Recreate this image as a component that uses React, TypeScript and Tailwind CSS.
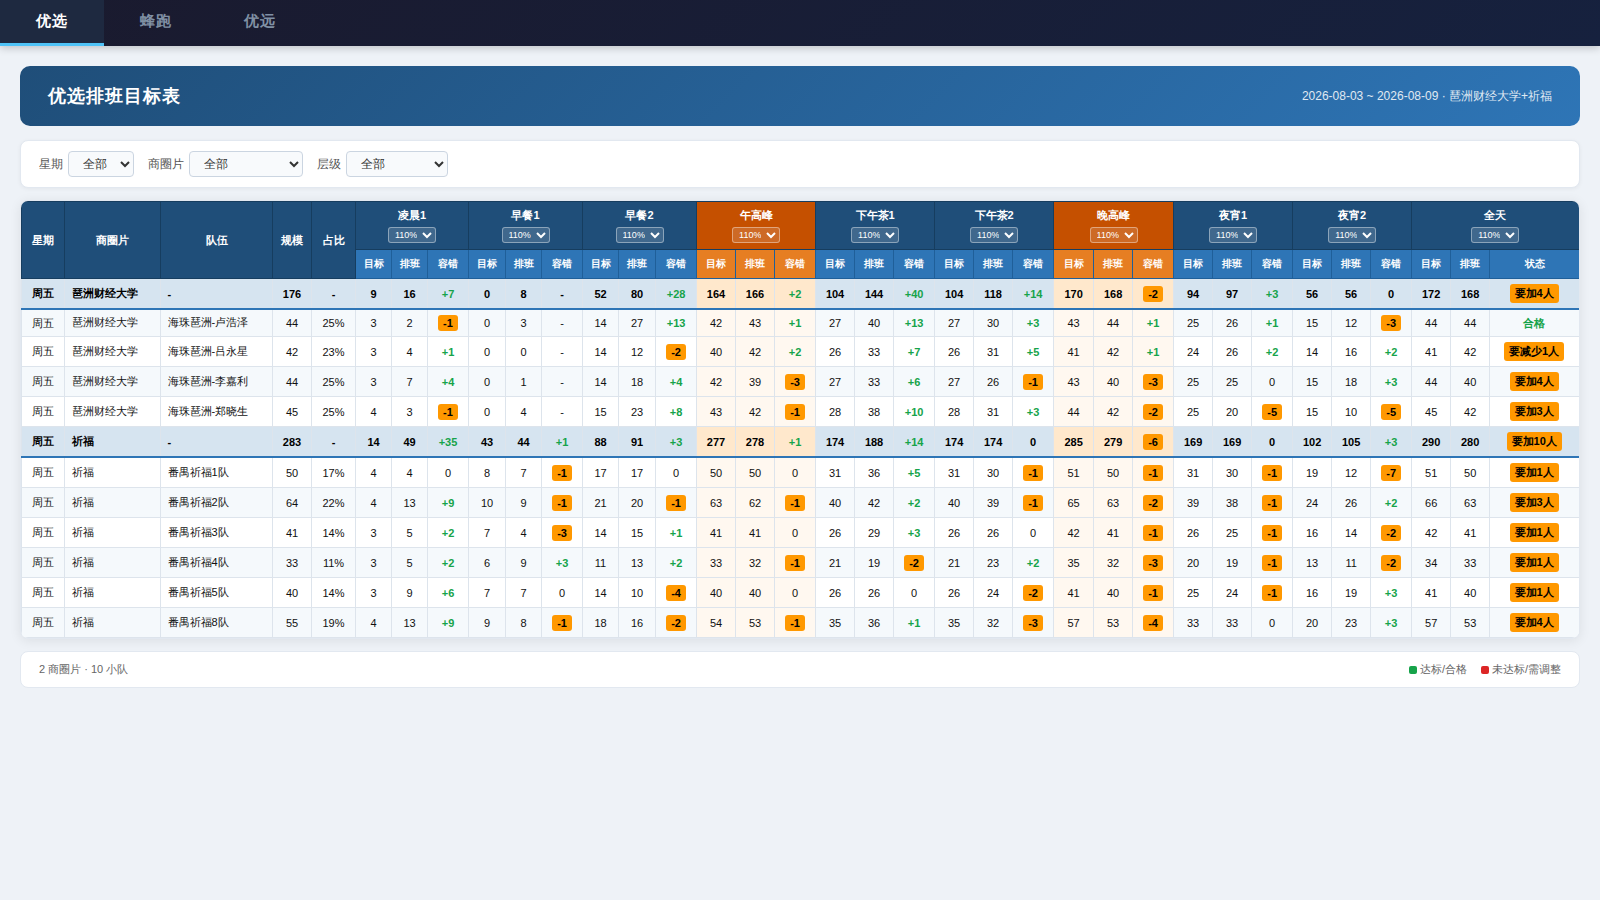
import React from 'react';

const COLS = [
  43, 96, 112, 39, 44, 36, 36, 41, 37, 36, 41, 36, 37, 41, 39, 39, 41, 39, 39, 41, 39, 39, 41, 40, 39, 41, 39, 39, 41,
  39, 39, 41, 39, 39, 90,
];

const PERIODS = ['凌晨1', '早餐1', '早餐2', '午高峰', '下午茶1', '下午茶2', '晚高峰', '夜宵1', '夜宵2', '全天'];
const isPeak = (period: number) => period === 3 || period === 6;

type Row = { area: string; team: string; size: string; share: string; values: string; status: string; height: number };

const ROWS: Row[] = [
  { area: '琶洲财经大学', team: '-', size: '176', share: '-', height: 30, status: '要加4人', values: '9 16 +7 0 8 - 52 80 +28 164 166 +2 104 144 +40 104 118 +14 170 168 -2 94 97 +3 56 56 0 172 168' },
  { area: '琶洲财经大学', team: '海珠琶洲-卢浩泽', size: '44', share: '25%', height: 28, status: '合格', values: '3 2 -1 0 3 - 14 27 +13 42 43 +1 27 40 +13 27 30 +3 43 44 +1 25 26 +1 15 12 -3 44 44' },
  { area: '琶洲财经大学', team: '海珠琶洲-吕永星', size: '42', share: '23%', height: 30, status: '要减少1人', values: '3 4 +1 0 0 - 14 12 -2 40 42 +2 26 33 +7 26 31 +5 41 42 +1 24 26 +2 14 16 +2 41 42' },
  { area: '琶洲财经大学', team: '海珠琶洲-李嘉利', size: '44', share: '25%', height: 30, status: '要加4人', values: '3 7 +4 0 1 - 14 18 +4 42 39 -3 27 33 +6 27 26 -1 43 40 -3 25 25 0 15 18 +3 44 40' },
  { area: '琶洲财经大学', team: '海珠琶洲-郑晓生', size: '45', share: '25%', height: 30, status: '要加3人', values: '4 3 -1 0 4 - 15 23 +8 43 42 -1 28 38 +10 28 31 +3 44 42 -2 25 20 -5 15 10 -5 45 42' },
  { area: '祈福', team: '-', size: '283', share: '-', height: 30, status: '要加10人', values: '14 49 +35 43 44 +1 88 91 +3 277 278 +1 174 188 +14 174 174 0 285 279 -6 169 169 0 102 105 +3 290 280' },
  { area: '祈福', team: '番禺祈福1队', size: '50', share: '17%', height: 31, status: '要加1人', values: '4 4 0 8 7 -1 17 17 0 50 50 0 31 36 +5 31 30 -1 51 50 -1 31 30 -1 19 12 -7 51 50' },
  { area: '祈福', team: '番禺祈福2队', size: '64', share: '22%', height: 30, status: '要加3人', values: '4 13 +9 10 9 -1 21 20 -1 63 62 -1 40 42 +2 40 39 -1 65 63 -2 39 38 -1 24 26 +2 66 63' },
  { area: '祈福', team: '番禺祈福3队', size: '41', share: '14%', height: 30, status: '要加1人', values: '3 5 +2 7 4 -3 14 15 +1 41 41 0 26 29 +3 26 26 0 42 41 -1 26 25 -1 16 14 -2 42 41' },
  { area: '祈福', team: '番禺祈福4队', size: '33', share: '11%', height: 30, status: '要加1人', values: '3 5 +2 6 9 +3 11 13 +2 33 32 -1 21 19 -2 21 23 +2 35 32 -3 20 19 -1 13 11 -2 34 33' },
  { area: '祈福', team: '番禺祈福5队', size: '40', share: '14%', height: 30, status: '要加1人', values: '3 9 +6 7 7 0 14 10 -4 40 40 0 26 26 0 26 24 -2 41 40 -1 25 24 -1 16 19 +3 41 40' },
  { area: '祈福', team: '番禺祈福8队', size: '55', share: '19%', height: 30, status: '要加4人', values: '4 13 +9 9 8 -1 18 16 -2 54 53 -1 35 36 +1 35 32 -3 57 53 -4 33 33 0 20 23 +3 57 53' },
];

const isShort = (value: string) => /^-\d/.test(value);

function Delta({ value }: { value: string }) {
  if (isShort(value)) {
    return <span className="inline-block rounded-[3px] bg-[#ff9800] px-[5px] py-[2px] font-bold leading-[12px] text-black">{value}</span>;
  }
  if (value.startsWith('+')) return <span className="font-bold text-[#16a34a]">{value}</span>;
  return <>{value}</>;
}

function Filter({ label, width }: { label: string; width: string }) {
  return (
    <label className="flex items-center gap-[5px] text-[12px] text-[#555]">
      {label}
      <select className={`h-[26px] rounded-[4px] border border-[#cbd5e1] bg-[#f8fafc] px-[10px] text-[12px] text-[#333] ${width}`}>
        <option>全部</option>
      </select>
    </label>
  );
}

function BodyRow({ row, index }: { row: Row; index: number }) {
  const group = row.team === '-';
  const passed = row.status === '合格';
  const values = row.values.split(' ');
  const line = group ? 'border border-[#dde4ec] border-b-2 border-b-[#2e75b6]' : 'border border-[#dde4ec]';
  const bg = group ? 'bg-[#d6e4f0]' : index % 2 === 1 ? 'bg-[#f5f9fc]' : 'bg-white';
  const numeric = `${line} px-0 pt-[2px] pb-0 text-center`;
  const name = `${line} py-0 pr-0 pl-[6.5px] text-left`;
  return (
    <tr className={`${bg} ${group ? 'font-bold text-black' : 'text-[#111]'}`} style={{ height: row.height }}>
      <td className={`${line} px-0 pb-0 text-center ${passed ? 'pt-[2px]' : 'pt-0'}`}>周五</td>
      <td className={name}>{row.area}</td>
      <td className={`${name} ${group ? 'pt-[2px]' : ''}`}>{row.team}</td>
      <td className={numeric}>{row.size}</td>
      <td className={numeric}>{row.share}</td>
      {values.map((v, i) => {
        const peak = isPeak(Math.floor(i / 3));
        const tint = peak ? (group ? 'bg-[#ffe8cc]' : 'bg-[#fff8f0]') : '';
        const delta = i % 3 === 2;
        return (
          <td key={i} className={`${line} px-0 pb-0 text-center ${delta && isShort(v) ? 'pt-[1px]' : 'pt-[2px]'} ${tint}`}>
            {delta ? <Delta value={v} /> : v}
          </td>
        );
      })}
      <td className={`${line} pr-[1px] pb-0 pl-0 text-center ${passed ? 'pt-[2px]' : 'pt-0'}`}>
        {passed ? (
          <span className="font-bold text-[#16a34a]">{row.status}</span>
        ) : (
          <span className="inline-block rounded-[3px] bg-[#ff9800] px-[5px] py-[2px] font-bold leading-[15px] text-black">{row.status}</span>
        )}
      </td>
    </tr>
  );
}

export default function App() {
  const dark = 'border border-[#163d5f] bg-[#1f4e79] p-0 font-bold';
  return (
    <div className="min-h-screen bg-[#eef2f7] font-['Liberation_Sans',sans-serif] text-[#333]">
      <nav className="relative flex h-[46px] bg-[linear-gradient(135deg,#1a1a2e,#16213e)] shadow-[0_2px_8px_rgba(0,0,0,0.2)]">
        {['优选', '蜂跑', '优远'].map((name, i) => (
          <button
            key={name}
            className={`w-[104px] border-b-[3px] px-[36px] text-[15px] font-bold tracking-[1px] whitespace-nowrap ${
              i === 0 ? 'border-[#4fc3f7] bg-[#1e2940] text-white' : 'border-transparent text-[#8090a4]'
            }`}
          >
            {name}
          </button>
        ))}
      </nav>

      <main className="px-5 pt-5">
        <header className="flex h-[60px] items-center justify-between rounded-[10px] bg-[linear-gradient(135deg,#1f4e79,#2e75b6)] px-[28px] text-white">
          <h1 className="text-[18px] font-bold tracking-[1px]">优选排班目标表</h1>
          <span className="text-[12px] opacity-85">2026-08-03 ~ 2026-08-09 · 琶洲财经大学+祈福</span>
        </header>

        <section className="mt-[14px] flex h-[48px] items-center gap-[14px] rounded-[8px] border border-[#e2e8f0] bg-white px-[18px] shadow-[0_1px_4px_rgba(0,0,0,0.05)]">
          <Filter label="星期" width="w-[66px]" />
          <Filter label="商圈片" width="w-[114px]" />
          <Filter label="层级" width="w-[102px]" />
        </section>

        <section className="mt-[12px] overflow-hidden rounded-[8px] border border-[#e2e8f0] bg-white shadow-[0_2px_12px_rgba(0,0,0,0.08)]">
          <table className="w-[1558px] table-fixed border-collapse text-[11px] leading-[15px]">
            <colgroup>
              {COLS.map((w, i) => (
                <col key={i} style={{ width: w }} />
              ))}
            </colgroup>
            <thead className="text-white">
              <tr className="h-[48px]">
                {['星期', '商圈片', '队伍', '规模', '占比'].map((h) => (
                  <th key={h} rowSpan={2} className={dark}>
                    {h}
                  </th>
                ))}
                {PERIODS.map((p, i) => (
                  <th key={p} colSpan={3} className={`border border-[#163d5f] p-0 font-bold ${isPeak(i) ? 'bg-[#c55000]' : 'bg-[#1f4e79]'}`}>
                    <div className={`flex flex-col items-center gap-[4px] ${i === 9 ? 'pr-[1px]' : ''}`}>
                      <span>{p}</span>
                      <select className="h-[16px] w-[48px] rounded-[3px] border border-white/40 bg-white/15 px-[2px] text-[9px] font-normal text-white">
                        <option>110%</option>
                      </select>
                    </div>
                  </th>
                ))}
              </tr>
              <tr className="h-[29px] text-[10px]">
                {PERIODS.flatMap((p, i) =>
                  ['目标', '排班', i === 9 ? '状态' : '容错'].map((h) => (
                    <th
                      key={p + h}
                      className={`border border-[#1f5f99] px-0 pt-0 pb-[1px] font-bold ${isPeak(i) ? 'bg-[#e67e22]' : 'bg-[#2e75b6]'}`}
                    >
                      {h}
                    </th>
                  )),
                )}
              </tr>
            </thead>
            <tbody>
              {ROWS.map((row, i) => (
                <BodyRow key={i} row={row} index={i} />
              ))}
            </tbody>
          </table>
        </section>

        <footer className="mt-[12px] flex h-[37px] items-center justify-between rounded-[8px] border border-[#e2e8f0] bg-white px-[18px] text-[11px] text-[#666]">
          <span>2 商圈片 · 10 小队</span>
          <div className="flex gap-[14px]">
            <span className="flex items-center gap-[3px]">
              <i className="size-[8px] rounded-[2px] bg-[#16a34a]" />
              达标/合格
            </span>
            <span className="flex items-center gap-[3px]">
              <i className="size-[8px] rounded-[2px] bg-[#dc2626]" />
              未达标/需调整
            </span>
          </div>
        </footer>
      </main>
    </div>
  );
}
